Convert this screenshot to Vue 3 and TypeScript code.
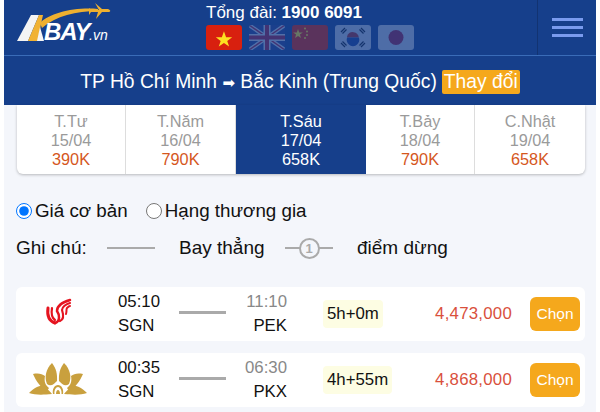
<script setup lang="ts">
interface DayTab {
  day: string;
  date: string;
  price: string;
  active?: boolean;
}

interface Flight {
  id: string;
  logo: 'airchina' | 'vna';
  depart: string;
  from: string;
  arrive: string;
  to: string;
  duration: string;
  price: string;
}

const tabs: DayTab[] = [
  { day: 'T.Tư', date: '15/04', price: '390K' },
  { day: 'T.Năm', date: '16/04', price: '790K' },
  { day: 'T.Sáu', date: '17/04', price: '658K', active: true },
  { day: 'T.Bảy', date: '18/04', price: '790K' },
  { day: 'C.Nhật', date: '19/04', price: '658K' },
];

const flights: Flight[] = [
  { id: 'ca', logo: 'airchina', depart: '05:10', from: 'SGN', arrive: '11:10', to: 'PEK', duration: '5h+0m', price: '4,473,000' },
  { id: 'vn', logo: 'vna', depart: '00:35', from: 'SGN', arrive: '06:30', to: 'PKX', duration: '4h+55m', price: '4,868,000' },
];
</script>

<template>
  <div class="page">
    <header class="top">
      <a class="logo" aria-label="ABAY.vn">
        <svg width="100" height="55" viewBox="0 0 100 55">
          <polygon points="1,41 15,15 23,15 12,41" fill="#f4f4f4" />
          <polygon points="12,41 23,15 27,15 25,24 22,41" fill="#f1b233" />
          <polygon points="21,41 24,27 28,41" fill="#f4f4f4" />
          <path d="M24,23 C34,13 58,7 82,9 L82,11 C60,11 40,16 26,28 Z" fill="#eeb02f" />
          <path d="M79,3 L86,9 L92,9 C95,10 95,12 92,12 L86,12 L80,19 L82,12 L75,12 L73,15 L73,8 L75,10 L83,10 Z" fill="#eeb02f" />
          <text x="28" y="40" class="logo-bay">BAY</text>
          <text x="73" y="40" class="logo-vn">.vn</text>
        </svg>
      </a>
      <div class="contact">
        <div class="hotline">Tổng đài: <b>1900 6091</b></div>
        <div class="flags">
          <svg class="flag" viewBox="0 0 36 25">
            <rect width="36" height="25" fill="#d8200f" />
            <polygon points="18,5.5 20.6,13 28,13 22,17.3 24.3,24 18,19.8 11.7,24 14,17.3 8,13 15.4,13" transform="translate(3.2 1.7) scale(.82)" fill="#fde020" />
          </svg>
          <svg class="flag dim" viewBox="0 0 36 25">
            <rect width="36" height="25" fill="#2d3f8f" />
            <path d="M0,0 L36,25 M36,0 L0,25" stroke="#fff" stroke-width="4" />
            <path d="M0,0 L36,25 M36,0 L0,25" stroke="#c8102e" stroke-width="1.4" />
            <path d="M18,0 V25 M0,12.5 H36" stroke="#fff" stroke-width="7" />
            <path d="M18,0 V25 M0,12.5 H36" stroke="#c8102e" stroke-width="4" />
          </svg>
          <svg class="flag cn" viewBox="0 0 36 25">
            <rect width="36" height="25" fill="#d81e06" />
            <polygon points="6,4 7.2,7.4 10.8,7.4 7.9,9.5 9,13 6,10.9 3,13 4.1,9.5 1.2,7.4 4.8,7.4" fill="#fde020" />
            <circle cx="13" cy="3.5" r="1" fill="#fde020" />
            <circle cx="15" cy="6.5" r="1" fill="#fde020" />
            <circle cx="15" cy="10" r="1" fill="#fde020" />
            <circle cx="13" cy="13" r="1" fill="#fde020" />
          </svg>
          <svg class="flag light" viewBox="0 0 36 25">
            <rect width="36" height="25" fill="#fff" />
            <path d="M12.2,11 a6,6 0 0 1 11.6,1.5 H12 Z" fill="#d8200f" />
            <path d="M13,18.5 a6,6 0 0 0 10,0 a6,6 0 0 0 .8,-6 H12.2 a6,6 0 0 0 .8,6 Z" fill="#1a3fa0" />
            <path d="M6,7 L10,3 M7.5,8.5 L11.5,4.5 M30,7 L26,3 M28.5,8.5 L24.5,4.5 M6,18 L10,22 M7.5,16.5 L11.5,20.5 M30,18 L26,22 M28.5,16.5 L24.5,20.5" stroke="#111" stroke-width="1.2" />
          </svg>
          <svg class="flag light" viewBox="0 0 36 25">
            <rect width="36" height="25" fill="#fff" />
            <circle cx="18" cy="12.5" r="7.5" fill="#c8102e" />
          </svg>
        </div>
      </div>
      <button class="menu" aria-label="Menu">
        <span></span><span></span><span></span>
      </button>
    </header>

    <div class="route">
      <span>TP Hồ Chí Minh <i class="arrow">➡</i> Bắc Kinh (Trung Quốc)</span>
      <a class="change">Thay đổi</a>
    </div>

    <div class="body">
      <div class="tabs">
        <div v-for="t in tabs" :key="t.date" class="tab" :class="{ active: t.active }">
          <div>{{ t.day }}</div>
          <div>{{ t.date }}</div>
          <div class="tab-price">{{ t.price }}</div>
        </div>
      </div>

      <div class="fare">
        <label class="fare-opt"><input type="radio" name="fare" checked />Giá cơ bản</label>
        <label class="fare-opt"><input type="radio" name="fare" />Hạng thương gia</label>
      </div>

      <div class="legend">
        <span class="legend-title">Ghi chú:</span>
        <span class="legend-line"></span>
        <span class="legend-direct">Bay thẳng</span>
        <span class="legend-stop">
          <span class="stop-num">1</span>
        </span>
        <span>điểm dừng</span>
      </div>

      <div class="flights">
        <div v-for="f in flights" :key="f.id" class="flight">
          <div class="airline">
            <svg v-if="f.logo === 'airchina'" width="32" height="32" viewBox="0 0 32 32" fill="none" stroke="#e5141f" stroke-linecap="round">
              <path d="M6,11 C5,18 7,24 13,26" stroke-width="3" />
              <path d="M10,11 C9,17 10,21 13,23" stroke-width="2.2" />
              <path d="M13,26 C19,24 17,17 15,14 C15,9 21,5 28,3" stroke-width="2.5" />
              <path d="M18,24 C23,22 21,16 20,13 C20,10 24,7 28,6" stroke-width="2.2" />
              <path d="M24,17 C25,14 24,12 25,11 C26,10 27,9 28,9" stroke-width="2" />
            </svg>
            <svg v-else width="62" height="38" viewBox="0 0 62 38" fill="#c9a03e">
              <path d="M25,3 C19,9 17,17 20,24 C24,27 27,24 30,21 C30.500,14 29,8 25,3 Z" />
              <path d="M37,3 C43,9 45,17 42,24 C38,27 35,24 32,21 C31.500,14 33,8 37,3 Z" />
              <path d="M6,14 C12,13 15,14 18,16 C17,21 18,25 22,28 L20,31 C14,28 9,21 6,14 Z" />
              <path d="M56,14 C50,13 47,14 44,16 C45,21 44,25 40,28 L42,31 C48,28 53,21 56,14 Z" />
              <path d="M2,33 C8,27 13,25 17,26 C20,29 23,31 25,34 C15,35 8,35 2,33 Z" />
              <path d="M60,33 C54,27 49,25 45,26 C42,29 39,31 37,34 C47,35 54,35 60,33 Z" />
              <path d="M26,34 C25,29 27.500,25 31,25 C34.500,25 37,29 36,34 L34.500,34 C35,30 33,27 31,27 C29,27 27,30 27.500,34 Z" />
              <path d="M29,34 C29,31.500 30,30 31,30 C32,30 33,31.500 33,34 Z" />
            </svg>
          </div>
          <div class="time">
            <div>{{ f.depart }}</div>
            <div>{{ f.from }}</div>
          </div>
          <span class="flight-line"></span>
          <div class="time arrive">
            <div class="muted">{{ f.arrive }}</div>
            <div>{{ f.to }}</div>
          </div>
          <div class="duration-cell"><span class="duration">{{ f.duration }}</span></div>
          <div class="price">{{ f.price }}</div>
          <button class="pick">Chọn</button>
        </div>
      </div>
    </div>
  </div>
</template>

<style>
html,
body {
  margin: 0;
  background: #fff;
  overflow: hidden;
}
</style>

<style scoped>
.page {
  box-sizing: border-box;
  width: 592px;
  height: 412px;
  margin: 0 4px;
  overflow: hidden;
  background: #f4f6fb;
  font-family: "Liberation Sans", Arial, sans-serif;
  color: #111;
}

/* header */
.top {
  display: flex;
  height: 55px;
  background: #163f8b;
  border-bottom: 1px solid #3a6cb8;
}
.logo {
  width: 200px;
  padding-left: 12px;
  box-sizing: border-box;
}
.logo-bay {
  font: italic bold 24px "Liberation Sans", sans-serif;
  fill: #fff;
  letter-spacing: -1.2px;
}
.logo-vn {
  font: italic 14px "Liberation Sans", sans-serif;
  fill: #fff;
}
.contact {
  width: 333px;
  padding-left: 2px;
  box-sizing: border-box;
}
.hotline {
  height: 25px;
  line-height: 25px;
  font-size: 17px;
  color: #fff;
}
.flags {
  display: flex;
  gap: 7px;
}
.flag {
  width: 36px;
  height: 25px;
  border-radius: 3px;
}
.dim {
  opacity: 0.25;
}
.cn {
  opacity: 0.35;
}
.light {
  opacity: 0.24;
}
.menu {
  display: flex;
  flex-direction: column;
  gap: 5px;
  align-items: center;
  width: 59px;
  padding: 18px 0 0;
  background: none;
  border: 0;
  border-left: 1px solid #123372;
}
.menu span {
  width: 31px;
  height: 3px;
  background: #7a9bee;
}

/* route bar */
.route {
  display: flex;
  justify-content: center;
  align-items: center;
  gap: 5px;
  height: 49px;
  padding-top: 3px;
  box-sizing: border-box;
  background: #163f8b;
  color: #fff;
  font-size: 19.3px;
}
.arrow {
  font-style: normal;
  font-family: "DejaVu Sans", sans-serif;
  font-size: 15px;
}
.change {
  padding: 1px 2px;
  background: #f5a81c;
  border-radius: 2px;
}

/* day tabs */
.body {
  padding: 0 11px 0 12px;
}
.tabs {
  display: grid;
  grid-template-columns: 109px 110px 130px 109px 1fr;
  margin-left: 1px;
  background: #fff;
  border-radius: 0 0 6px 6px;
  box-shadow: 0 1px 3px rgba(0, 0, 0, 0.25);
  overflow: hidden;
}
.tab {
  height: 69px;
  padding-top: 7px;
  box-sizing: border-box;
  text-align: center;
  font-size: 16.3px;
  line-height: 19px;
  color: #9a9a9a;
  border-right: 1px solid #ddd;
}
.tab:last-child {
  border-right: 0;
}
.tab-price {
  color: #d5571d;
}
.tab.active {
  background: #163f8b;
  color: #fff;
  border-right: 0;
}
.tab.active .tab-price {
  color: #fff;
}

/* fare options */
.fare {
  display: flex;
  gap: 18px;
  margin-top: 26px;
  font-size: 18.8px;
  line-height: 22px;
}
.fare-opt {
  display: flex;
  align-items: center;
}
.fare-opt input {
  width: 16px;
  height: 16px;
  margin: 0 3px 0 0;
}

/* legend */
.legend {
  display: flex;
  align-items: center;
  height: 28px;
  margin-top: 12px;
  font-size: 19px;
}
.legend-title {
  width: 91px;
}
.legend-line {
  width: 48px;
  height: 2px;
  background: #aaa;
}
.legend-direct {
  width: 106px;
  margin-left: 24px;
}
.legend-stop {
  display: flex;
  justify-content: center;
  align-items: center;
  width: 48px;
  height: 2px;
  margin-right: 24px;
  background: #aaa;
}
.stop-num {
  width: 17px;
  height: 17px;
  border: 2px solid #aaa;
  border-radius: 50%;
  background: #f4f6fb;
  color: #aaa;
  font-size: 13px;
  font-weight: bold;
  line-height: 17px;
  text-align: center;
}

/* flights */
.flights {
  display: flex;
  flex-direction: column;
  gap: 12px;
  margin-top: 25px;
}
.flight {
  display: grid;
  grid-template-columns: 102px 61px 47px 61px 148px 77px 50px;
  align-items: center;
  height: 54px;
  background: #fff;
  border-radius: 6px;
}
.airline {
  display: flex;
  justify-content: center;
  padding-right: 18px;
  margin-bottom: 3px;
}
.time {
  font-size: 16.8px;
  line-height: 24px;
}
.arrive {
  text-align: right;
}
.muted {
  color: #888;
}
.flight-line {
  height: 3px;
  background: #aaa;
  margin-bottom: 4px;
}
.duration-cell {
  padding-left: 36px;
}
.duration {
  display: inline-block;
  padding: 0 4px;
  height: 28px;
  line-height: 28px;
  font-size: 16.8px;
  background: #fdfde3;
  border-radius: 4px;
}
.price {
  font-size: 16.8px;
  letter-spacing: 0.25px;
  color: #d9503c;
  text-align: right;
}
.pick {
  width: 50px;
  height: 34px;
  margin-left: 18px;
  padding: 0;
  border: 0;
  border-radius: 6px;
  background: #f5a81c;
  color: #fff;
  font: 15.5px "Liberation Sans", sans-serif;
}
</style>
